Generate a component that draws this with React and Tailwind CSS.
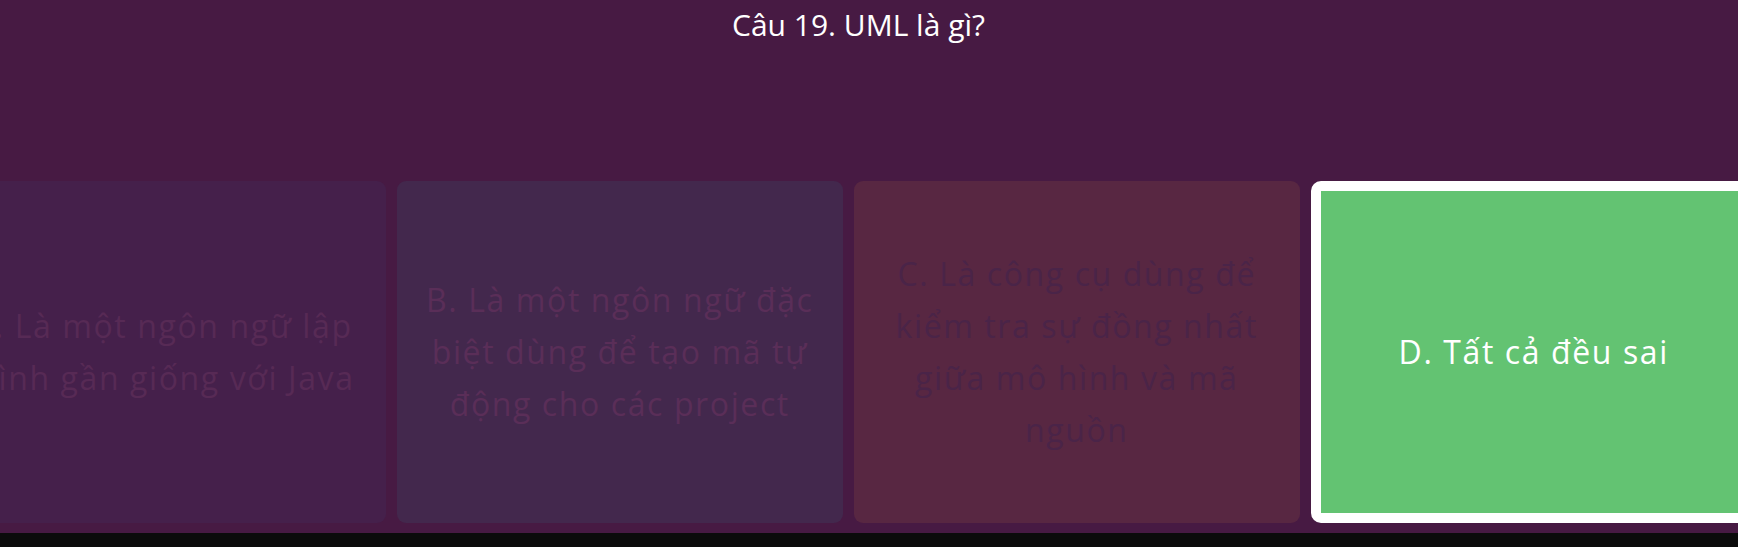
import React from 'react';

const options = [
  {
    lines: ['A. Là một ngôn ngữ lập', 'trình gần giống với Java'],
    card: 'bg-[#45204b]',
    text: 'text-[#572a55]',
  },
  {
    lines: ['B. Là một ngôn ngữ đặc', 'biệt dùng để tạo mã tự', 'động cho các project'],
    card: 'bg-[#43284d]',
    text: 'text-[#5a2e58]',
  },
  {
    lines: ['C. Là công cụ dùng để', 'kiểm tra sự đồng nhất', 'giữa mô hình và mã', 'nguồn'],
    card: 'bg-[#582742]',
    text: 'text-[#4a2448]',
  },
];

const App = () => {
  return (
    <div className="w-full h-[547px] bg-[#0b0b0b] overflow-hidden font-['Open_Sans',sans-serif]">
      <div className="h-[533px] bg-[#471a43] flex flex-col">
        {/* Question */}
        <div className="pt-[7px] pr-[21px] text-center">
          <h1 className="text-[30px] leading-[36px] text-white">Câu 19. UML là gì?</h1>
        </div>

        {/* Answers */}
        <div className="mt-auto pb-[10px] flex gap-[10.5px] ml-[-60.5px]">
          {options.map((opt, index) => (
            <div
              key={index}
              className={`w-[446.5px] h-[342px] shrink-0 rounded-[9px] flex flex-col items-center justify-center ${opt.card}`}
            >
              {opt.lines.map((line) => (
                <span key={line} className={`whitespace-nowrap text-[32px] leading-[52px] tracking-[1.6px] ${opt.text}`}>
                  {line}
                </span>
              ))}
            </div>
          ))}
          <div className="w-[446.5px] h-[342px] shrink-0 rounded-[10px] border-[10px] border-white bg-[#63c372] flex flex-col items-center justify-center">
            <span className="whitespace-nowrap text-[32px] leading-[52px] tracking-[1.6px] text-white">D. Tất cả đều sai</span>
          </div>
        </div>
      </div>
    </div>
  );
};

export default App;
